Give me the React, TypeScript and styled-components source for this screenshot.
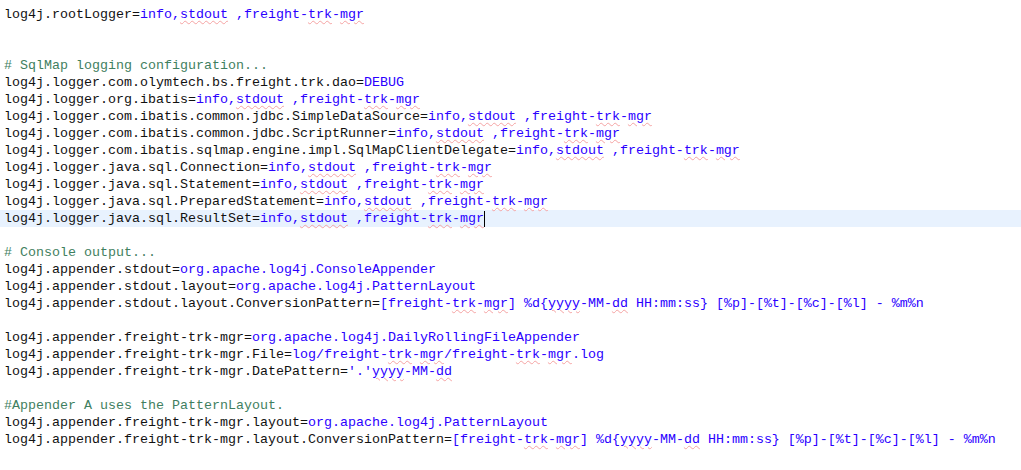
import React from "react";
import styled, { createGlobalStyle } from "styled-components";

type Line =
  | { kind: "blank" }
  | { kind: "comment"; text: string }
  | { kind: "prop"; key: string; value: string };

const lines: Line[] = [
  { kind: "prop", key: "log4j.rootLogger", value: "info,stdout ,freight-trk-mgr" },
  { kind: "blank" },
  { kind: "blank" },
  { kind: "comment", text: "# SqlMap logging configuration..." },
  { kind: "prop", key: "log4j.logger.com.olymtech.bs.freight.trk.dao", value: "DEBUG" },
  { kind: "prop", key: "log4j.logger.org.ibatis", value: "info,stdout ,freight-trk-mgr" },
  { kind: "prop", key: "log4j.logger.com.ibatis.common.jdbc.SimpleDataSource", value: "info,stdout ,freight-trk-mgr" },
  { kind: "prop", key: "log4j.logger.com.ibatis.common.jdbc.ScriptRunner", value: "info,stdout ,freight-trk-mgr" },
  { kind: "prop", key: "log4j.logger.com.ibatis.sqlmap.engine.impl.SqlMapClientDelegate", value: "info,stdout ,freight-trk-mgr" },
  { kind: "prop", key: "log4j.logger.java.sql.Connection", value: "info,stdout ,freight-trk-mgr" },
  { kind: "prop", key: "log4j.logger.java.sql.Statement", value: "info,stdout ,freight-trk-mgr" },
  { kind: "prop", key: "log4j.logger.java.sql.PreparedStatement", value: "info,stdout ,freight-trk-mgr" },
  { kind: "prop", key: "log4j.logger.java.sql.ResultSet", value: "info,stdout ,freight-trk-mgr" },
  { kind: "blank" },
  { kind: "comment", text: "# Console output..." },
  { kind: "prop", key: "log4j.appender.stdout", value: "org.apache.log4j.ConsoleAppender" },
  { kind: "prop", key: "log4j.appender.stdout.layout", value: "org.apache.log4j.PatternLayout" },
  {
    kind: "prop",
    key: "log4j.appender.stdout.layout.ConversionPattern",
    value: "[freight-trk-mgr] %d{yyyy-MM-dd HH:mm:ss} [%p]-[%t]-[%c]-[%l] - %m%n",
  },
  { kind: "blank" },
  { kind: "prop", key: "log4j.appender.freight-trk-mgr", value: "org.apache.log4j.DailyRollingFileAppender" },
  { kind: "prop", key: "log4j.appender.freight-trk-mgr.File", value: "log/freight-trk-mgr/freight-trk-mgr.log" },
  { kind: "prop", key: "log4j.appender.freight-trk-mgr.DatePattern", value: "'.'yyyy-MM-dd" },
  { kind: "blank" },
  { kind: "comment", text: "#Appender A uses the PatternLayout." },
  { kind: "prop", key: "log4j.appender.freight-trk-mgr.layout", value: "org.apache.log4j.PatternLayout" },
  {
    kind: "prop",
    key: "log4j.appender.freight-trk-mgr.layout.ConversionPattern",
    value: "[freight-trk-mgr] %d{yyyy-MM-dd HH:mm:ss} [%p]-[%t]-[%c]-[%l] - %m%n",
  },
];

const CURRENT_LINE = 12;

// words the spell checker flags inside values
const renderValue = (value: string) =>
  value.split(/(stdout|trk|mgr|yyyy|dd)/).map((part, idx) =>
    idx % 2 === 1 ? <Misspelled key={idx}>{part}</Misspelled> : part
  );

function App() {
  return (
    <>
      <GlobalStyle />
      <Editor>
        {lines.map((line, idx) => (
          <Row key={idx} current={idx === CURRENT_LINE}>
            {line.kind === "comment" && <Comment>{line.text}</Comment>}
            {line.kind === "prop" && (
              <>
                <Key>{line.key}</Key>
                <Assign>=</Assign>
                <Value>{renderValue(line.value)}</Value>
              </>
            )}
            {idx === CURRENT_LINE && <Caret />}
          </Row>
        ))}
      </Editor>
    </>
  );
}

const GlobalStyle = createGlobalStyle`
  html, body {
    margin: 0;
    padding: 0;
    background: #ffffff;
  }
`;

const Editor = styled.div`
  width: 1021px;
  height: 470px;
  padding-top: 6px;
  box-sizing: border-box;
  overflow: hidden;
  background: #ffffff;
  font-family: "Liberation Mono", "DejaVu Sans Mono", monospace;
  font-size: 13.33px;
`;

const Row = styled.div<{ current?: boolean }>`
  height: 17px;
  line-height: 17px;
  padding-left: 4px;
  white-space: pre;
  display: flex;
  align-items: center;
  background: ${({ current }) => (current ? "#e8f2fe" : "transparent")};
`;

const Key = styled.span`
  color: #111111;
`;

const Assign = styled.span`
  color: #111111;
`;

const Value = styled.span`
  color: #2a00ff;
`;

const Comment = styled.span`
  color: #3f7f5f;
`;

const Misspelled = styled.span`
  text-decoration: underline wavy #f5a3a3;
  text-decoration-thickness: 1px;
  text-underline-offset: 2px;
`;

const Caret = styled.span`
  display: inline-block;
  width: 1px;
  height: 16px;
  background: #000000;
`;

export default App;
